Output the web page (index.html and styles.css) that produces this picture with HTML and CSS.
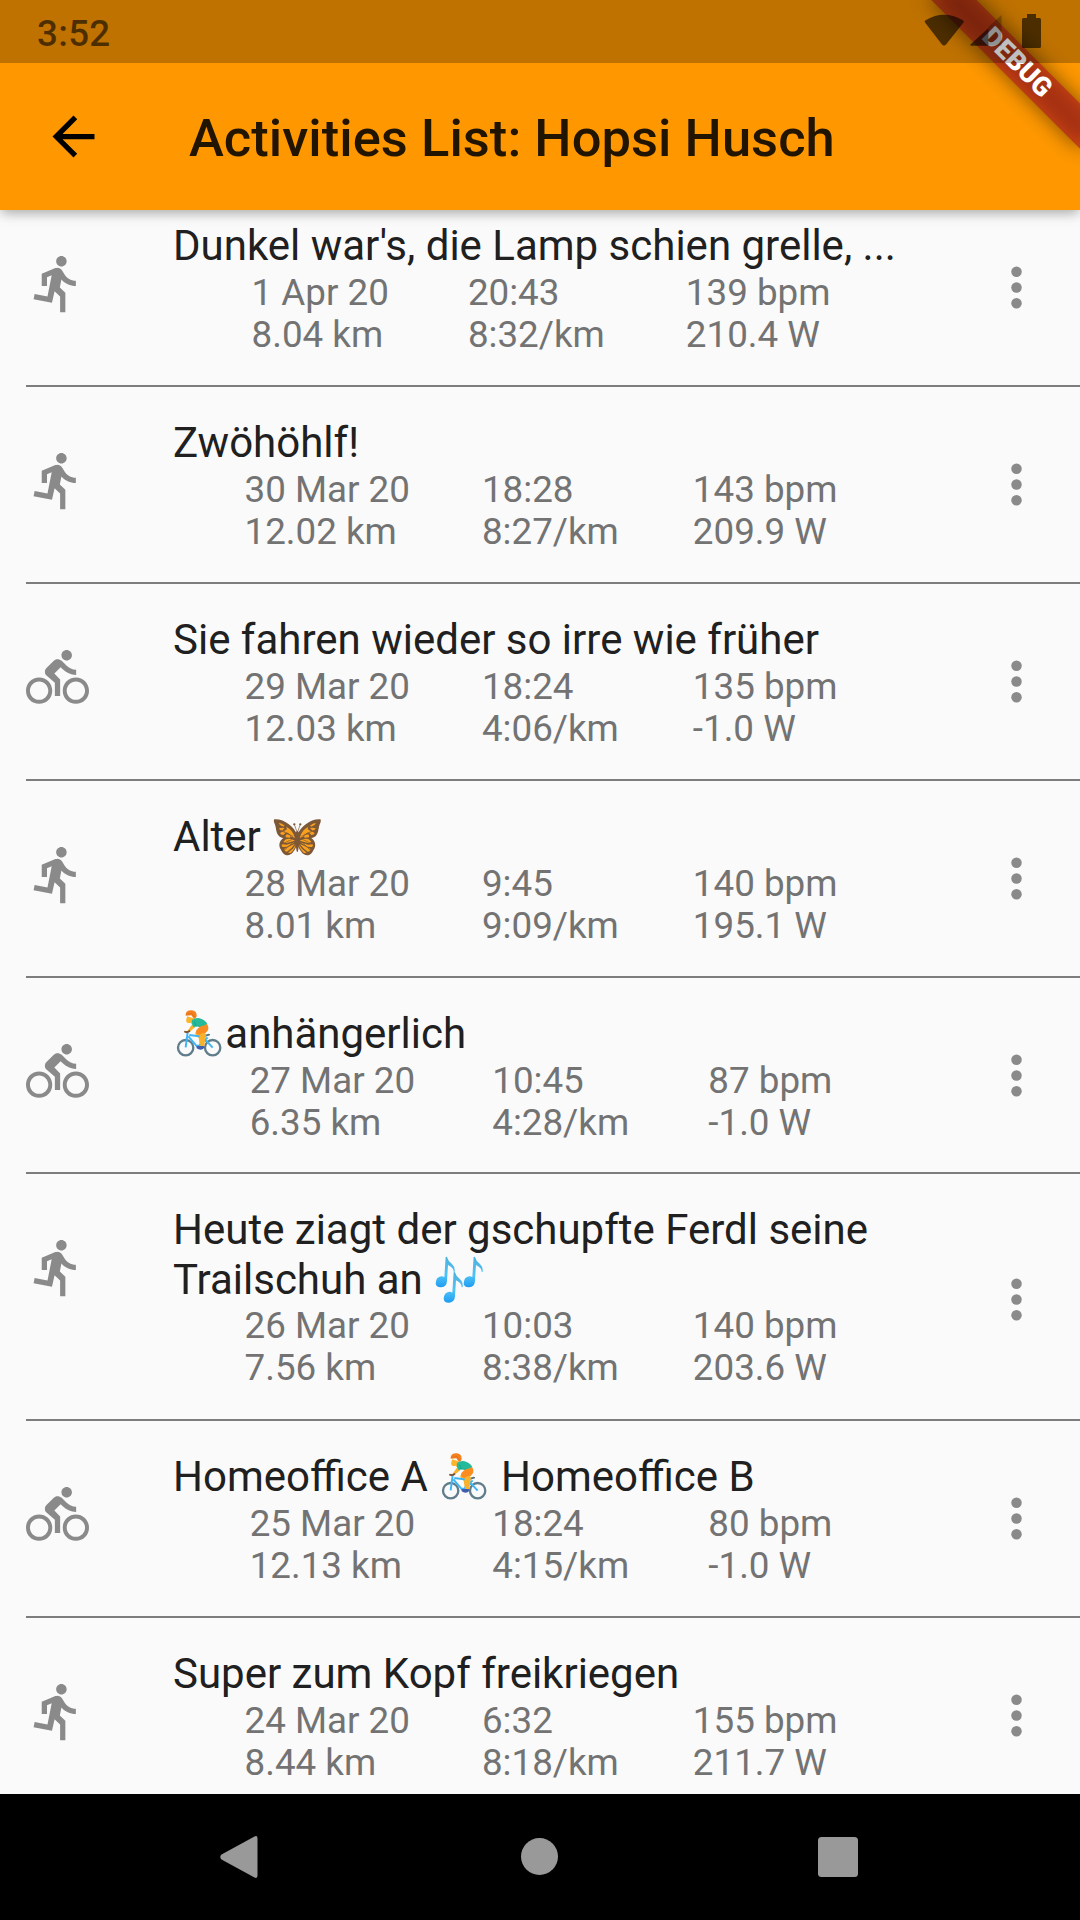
FILE: index.html
```html
<!DOCTYPE html>
<html lang="en">
<head>
<meta charset="utf-8">
<title>Activities List</title>
<link rel="stylesheet" href="styles.css">
</head>
<body>
<svg class="defs" width="0" height="0">
  <symbol id="run" viewBox="0 0 24 24"><path d="M13.49 5.48c1.1 0 2-.9 2-2s-.9-2-2-2-2 .9-2 2 .9 2 2 2zm-3.6 13.9l1-4.4 2.1 2v6h2v-7.5l-2.1-2 .6-3c1.3 1.5 3.3 2.5 5.5 2.5v-2c-1.9 0-3.5-1-4.3-2.4l-1-1.6c-.4-.6-1-1-1.7-1-.3 0-.5.1-.8.1l-5.2 2.2v4.7h2v-3.4l1.8-.7-1.6 8.1-4.9-1-.4 2 7 1.4z"/></symbol>
  <symbol id="bike" viewBox="0 0 24 24"><path d="M15.5 5.5c1.1 0 2-.9 2-2s-.9-2-2-2-2 .9-2 2 .9 2 2 2zM5 12c-2.8 0-5 2.2-5 5s2.2 5 5 5 5-2.2 5-5-2.2-5-5-5zm0 8.5c-1.9 0-3.5-1.6-3.5-3.5s1.6-3.5 3.5-3.5 3.5 1.6 3.5 3.5-1.6 3.5-3.5 3.5zm5.8-10l2.4-2.4.8.8c1.3 1.3 3 2.1 5.1 2.1V9c-1.5 0-2.7-.6-3.6-1.5l-1.9-1.9c-.5-.4-1-.6-1.6-.6s-1.1.2-1.4.6L7.8 8.4c-.4.4-.6.9-.6 1.4 0 .6.2 1.1.6 1.4L11 14v5h2v-6.2l-2.2-2.3zM19 12c-2.8 0-5 2.2-5 5s2.2 5 5 5 5-2.2 5-5-2.2-5-5-5zm0 8.5c-1.9 0-3.5-1.6-3.5-3.5s1.6-3.5 3.5-3.5 3.5 1.6 3.5 3.5-1.6 3.5-3.5 3.5z"/></symbol>
  <symbol id="more" viewBox="0 0 24 24"><circle cx="12" cy="6" r="2"/><circle cx="12" cy="12" r="2"/><circle cx="12" cy="18" r="2"/></symbol>
  <symbol id="butterfly" viewBox="0 0 157 147">
    <g fill="#7d5836">
      <path d="M78 68C70 45 40 20 10 22C8 24 8 28 10 33C16 44 14 60 22 70C26 76 32 78 37 78C26 86 22 98 28 110C32 116 34 124 42 128C58 136 72 118 77 100H81C86 118 100 136 116 128C124 124 126 116 130 110C136 98 132 86 121 78C126 78 132 76 136 70C144 60 142 44 148 33C150 28 150 24 148 22C118 20 88 45 80 68Z"/>
      <path d="M74 62q5-12 10 0l1 32-4 24q-2 4-4 0l-4-24z"/>
      <circle cx="70" cy="37" r="3.500"/><circle cx="88" cy="37" r="3.500"/>
    </g>
    <path d="M70 37l7 20M88 37l-7 20" stroke="#7d5836" stroke-width="2" fill="none"/>
    <g id="wing">
      <g fill="#f9a11f">
        <path d="M23 33q10 0 18 8-2 3-6 2-8-1-12-10z"/>
        <path d="M24 49q8-3 17-1l-8 8q-7 0-9-7z"/>
        <path d="M27 64q4-5 11-6l8 2-9 9q-8 0-10-5z"/>
        <path d="M46 44q20 10 26 34l-12-5q-3-9-16-12l-4-5 8-4z"/>
        <path d="M44 69q8-6 15 3l-2 5-13-1z"/>
        <path d="M72 86q-14-9-27-4l-8 7q4 6 13 3z"/>
        <path d="M71 91l-24 7-14-1q-3 5 2 8l13-1z"/>
        <path d="M72 95q-10 15-24 24-8 0-8-8l11-6z"/>
        <path d="M74 98q-3 15-15 25l-8-1q14-8 23-24z"/>
      </g>
      <path d="M68 80L34 96M68 88L38 117M66 73L28 55" stroke="#7d5836" stroke-width="2" fill="none"/>
    </g>
    <use href="#wing" transform="matrix(-1 0 0 1 158 0)"/>
  </symbol>
  <symbol id="cyclist" viewBox="0 0 157 147">
    <g fill="none" stroke="#607d8b" stroke-width="7"><circle cx="38" cy="116" r="23"/><circle cx="119" cy="116" r="23"/></g>
    <path d="M85 81l22-7q6 0 4 5l-14 4z" fill="#546e7a"/>
    <path d="M57 47q-10 13-13 18l-9 1v5q13 2 17-4l15-13z" fill="#fbb22b"/>
    <path d="M67 70q-2 8 10 16l4 27h10l4-40z" fill="#fbb22b"/>
    <path d="M44 70L38 115M46 82L70 110H80L98 77M49 78L89 83L119 116M80 110L104 85" stroke="#40b5f5" stroke-width="6" fill="none" stroke-linejoin="round"/>
    <path d="M34 67q9 6 17-2" stroke="#6d4c41" stroke-width="5" fill="none"/>
    <path d="M43 22q-8 18 2 20 6 0 8-1l4 5 10-4-6-14z" fill="#fbb52d"/>
    <path d="M38 16q2-13 18-12 16 2 15 17-1 7-8 9l-8-11-17 1z" fill="#f4801f"/>
    <path d="M40 15q9 3 15-3l10 12" stroke="#d96b14" stroke-width="2" fill="none"/>
    <path d="M57 33q14-10 29-3 13 5 17 16-9 7-20 8l-10-3-10 4q-9-6-6-22z" fill="#26b99a"/>
    <path d="M64 37l5 14 17 2" stroke="#149b80" stroke-width="2" fill="none"/>
    <path d="M102 45q11 14-5 28-13 8-26 1-8-9 12-22 11-2 19-7z" fill="#fb8c20"/>
    <path d="M80 83q-2-8 12-12l7 5-5 35H82z" fill="#fbb22b"/>
    <path d="M70 111l22 0q6 4-3 10-10 3-18-3z" fill="#3f5fae"/>
  </symbol>
  <symbol id="notes" viewBox="0 0 157 147">
    <linearGradient id="note-fill" x1="0" y1="0" x2="0" y2="1"><stop offset="0" stop-color="#4fb0dc"/><stop offset=".6" stop-color="#4fc3f7"/><stop offset="1" stop-color="#1e9cf0"/></linearGradient>
    <path id="note" fill="url(#note-fill)" d="M38 6q4-3 5 2 2 10 14 19 10 9 8 23-1 2-3 0 0-12-17-20l-3 48q-1 17-17 19-16 1-17-12 1-19 17-21 7 0 9 3z"/>
    <use href="#note" transform="translate(24 46)"/>
    <use href="#note" transform="translate(84 0)"/>
  </symbol>
</svg>
<div class="screen">
  <header class="app-bar">
    <div class="toolbar">
      <svg class="back" viewBox="0 0 24 24"><path d="M20 11H7.83l5.59-5.59L12 4l-8 8 8 8 1.41-1.41L7.83 13H20v-2z"/></svg>
      <h1>Activities List: Hopsi Husch</h1>
    </div>
    <div class="banner-clip"><div class="banner"><span>DEBUG</span></div></div>
    <div class="status">
      <span class="clock">3:52</span>
      <svg class="status-icons" viewBox="0 0 120 36">
        <path d="M1 8.5 Q0 7 2 6 Q20 -4.5 38.500 6 Q40.500 7 39.500 8.500 L22 30.500 Q20 32.500 18 30.500Z"/>
        <path opacity=".4" d="M77.500 1v30.700h-13v-19z"/>
        <path d="M64.500 14v17.700h-17.500q-1-.5-.3-1.500z"/>
        <path d="M103 0h9v4h3.500q1.500 0 1.500 1.500v27q0 1.500-1.500 1.500h-16q-1.500 0-1.500-1.500v-27q0-1.500 1.500-1.500h3.500z"/>
      </svg>
    </div>
  </header>

  <main class="list">
    <article class="row first">
      <svg class="sport"><use href="#run"/></svg>
      <div class="content">
        <h2>Dunkel war's, die Lamp schien grelle, ...</h2>
        <div class="stats"><p>1 Apr 20<br>8.04 km</p><p>20:43<br>8:32/km</p><p>139 bpm<br>210.4 W</p></div>
      </div>
      <svg class="more"><use href="#more"/></svg>
    </article>
    <article class="row">
      <svg class="sport"><use href="#run"/></svg>
      <div class="content">
        <h2>Zwöhöhlf!</h2>
        <div class="stats"><p>30 Mar 20<br>12.02 km</p><p>18:28<br>8:27/km</p><p>143 bpm<br>209.9 W</p></div>
      </div>
      <svg class="more"><use href="#more"/></svg>
    </article>
    <article class="row">
      <svg class="sport"><use href="#bike"/></svg>
      <div class="content">
        <h2>Sie fahren wieder so irre wie früher</h2>
        <div class="stats"><p>29 Mar 20<br>12.03 km</p><p>18:24<br>4:06/km</p><p>135 bpm<br>-1.0 W</p></div>
      </div>
      <svg class="more"><use href="#more"/></svg>
    </article>
    <article class="row">
      <svg class="sport"><use href="#run"/></svg>
      <div class="content">
        <h2>Alter <span class="emoji">🦋<svg><use href="#butterfly"/></svg></span></h2>
        <div class="stats"><p>28 Mar 20<br>8.01 km</p><p>9:45<br>9:09/km</p><p>140 bpm<br>195.1 W</p></div>
      </div>
      <svg class="more"><use href="#more"/></svg>
    </article>
    <article class="row short">
      <svg class="sport"><use href="#bike"/></svg>
      <div class="content">
        <h2><span class="emoji">🚴<svg><use href="#cyclist"/></svg></span>anhängerlich</h2>
        <div class="stats"><p>27 Mar 20<br>6.35 km</p><p>10:45<br>4:28/km</p><p>87 bpm<br>-1.0 W</p></div>
      </div>
      <svg class="more"><use href="#more"/></svg>
    </article>
    <article class="row tall">
      <svg class="sport"><use href="#run"/></svg>
      <div class="content">
        <h2>Heute ziagt der gschupfte Ferdl seine Trailschuh an <span class="emoji">🎶<svg><use href="#notes"/></svg></span></h2>
        <div class="stats"><p>26 Mar 20<br>7.56 km</p><p>10:03<br>8:38/km</p><p>140 bpm<br>203.6 W</p></div>
      </div>
      <svg class="more"><use href="#more"/></svg>
    </article>
    <article class="row">
      <svg class="sport"><use href="#bike"/></svg>
      <div class="content">
        <h2>Homeoffice A <span class="emoji">🚴<svg><use href="#cyclist"/></svg></span> Homeoffice B</h2>
        <div class="stats"><p>25 Mar 20<br>12.13 km</p><p>18:24<br>4:15/km</p><p>80 bpm<br>-1.0 W</p></div>
      </div>
      <svg class="more"><use href="#more"/></svg>
    </article>
    <article class="row">
      <svg class="sport"><use href="#run"/></svg>
      <div class="content">
        <h2>Super zum Kopf freikriegen</h2>
        <div class="stats"><p>24 Mar 20<br>8.44 km</p><p>6:32<br>8:18/km</p><p>155 bpm<br>211.7 W</p></div>
      </div>
      <svg class="more"><use href="#more"/></svg>
    </article>
  </main>

  <nav class="nav-bar">
    <svg viewBox="0 0 42 42"><path d="M36.500 0.500q3-1.500 3 2v37q0 3.500-3 2L3.500 23.500q-2.500-2.500 0-5z"/></svg>
    <svg viewBox="0 0 42 42"><circle cx="21.500" cy="20.500" r="18.500"/></svg>
    <svg viewBox="0 0 42 42"><rect x="1" y="1" width="40" height="40" rx="3.500"/></svg>
  </nav>
</div>
</body>
</html>
```
FILE: styles.css
```css
* { box-sizing: border-box; }

body {
  margin: 0;
  font-family: Roboto, "Noto Color Emoji", sans-serif;
  background: #fafafa;
}

.defs { display: block; height: 0; }

.screen {
  width: 1080px;
  height: 1920px;
  display: flex;
  flex-direction: column;
  overflow: hidden;
}

.app-bar {
  position: relative;
  z-index: 1;
  height: 210px;
  flex: none;
  padding-top: 63px;
  background: #ff9800;
  box-shadow: 0 5px 10px -2px rgba(0, 0, 0, .2), 0 3px 14px rgba(0, 0, 0, .15);
}

.toolbar {
  height: 147px;
  display: flex;
  align-items: center;
  padding-left: 42px;
}

.back { width: 63px; height: 63px; margin-right: 84px; }

h1 {
  margin: 0;
  padding-top: 2px;
  font-size: 52.5px;
  font-weight: 500;
  line-height: 62px;
  letter-spacing: .04px;
  color: rgba(0, 0, 0, .87);
}

.status {
  position: absolute;
  inset: 0 0 auto 0;
  height: 63px;
  padding: 0 36px 0 37px;
  display: flex;
  justify-content: space-between;
  background: rgba(0, 0, 0, .25);
}

.clock {
  font-size: 36.75px;
  font-weight: 500;
  line-height: 67px;
  letter-spacing: .3px;
  color: rgba(0, 0, 0, .6);
}

.status-icons {
  width: 120px;
  height: 36px;
  margin-top: 14px;
  fill: rgba(0, 0, 0, .6);
}

.banner-clip {
  position: absolute;
  top: 0;
  right: 0;
  width: 210px;
  height: 210px;
  overflow: hidden;
}

.banner {
  position: absolute;
  left: 42px;
  top: 47.4px;
  width: 210px;
  height: 31.5px;
  transform: rotate(45deg);
  text-align: center;
  font-size: 26.8px;
  font-weight: 900;
  line-height: 31.5px;
  color: #fff;
}

.banner::before,
.banner::after {
  content: "";
  position: absolute;
  inset: 0;
}

.banner::before { background: rgba(0, 0, 0, .5); filter: blur(10.4px); }
.banner::after { background: rgba(183, 28, 28, .627); }
.banner span { position: relative; z-index: 1; }

.list {
  flex: 1;
  min-height: 0;
  overflow: hidden;
  padding-left: 26px;
}

.row {
  height: 197px;
  display: flex;
  border-bottom: 2px solid #7d7d7d;
}

.sport {
  width: 63px;
  height: 63px;
  flex: none;
  margin: 62px 84px 0 0;
  fill: #8a8a8a;
}

.content {
  width: 739px;
  flex: none;
  padding-top: 31px;
}

.more {
  width: 63px;
  height: 63px;
  flex: none;
  margin: 66px 32px 0 73px;
  fill: #8a8a8a;
}

h2 {
  margin: 0;
  font-size: 42px;
  font-weight: 400;
  line-height: 49px;
  color: #202020;
}

.emoji {
  position: relative;
  display: inline-block;
  height: 49px;
  vertical-align: top;
  color: transparent;
}

.emoji svg {
  position: absolute;
  left: 0;
  top: 0;
  width: 100%;
  height: 49px;
}

.stats {
  display: flex;
  justify-content: space-evenly;
  margin-left: -1.5px;
  padding: 2px 1.5px 0 0;
  font-size: 36.75px;
  line-height: 42px;
  color: #737373;
}

.stats p { margin: 0; }
.stats p:nth-child(2) { margin: 0 1px 0 -1px; }

.first { height: 177px; }
.first .sport { margin-top: 42px; }
.first .content { padding-top: 11px; }
.first .more { margin-top: 46px; }

.short { height: 196px; }

.tall { height: 247px; }
.tall .more { margin-top: 94px; }
.tall h2 { line-height: 50px; }
.tall .stats { padding-top: 0; }

.nav-bar {
  height: 126px;
  flex: none;
  display: flex;
  justify-content: space-between;
  align-items: center;
  padding: 0 221px 0 218px;
  background: #000;
}

.nav-bar svg { width: 42px; height: 42px; fill: #999; }
```
